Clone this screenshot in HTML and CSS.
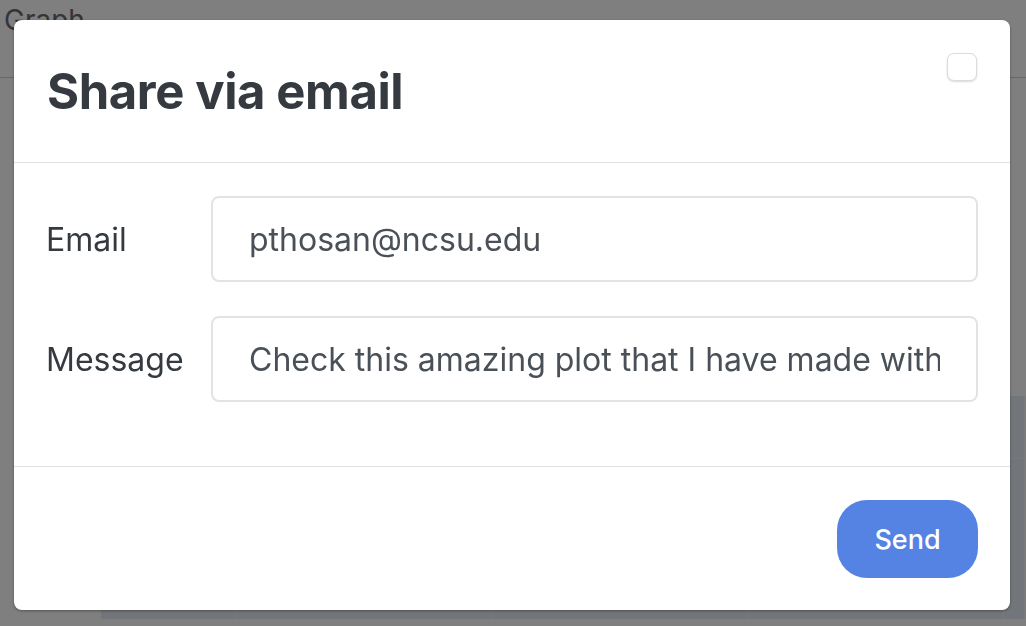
FILE: index.html
```html
<!DOCTYPE html>
<html lang="en">
<head>
<meta charset="utf-8">
<title>Share via email</title>
<link rel="stylesheet" href="styles.css">
</head>
<body>
<div class="page">
  <header class="topbar"><span class="brand">Graph</span></header>
  <main class="content">
    <div class="grid">
      <div class="cell"></div><div class="cell"></div><div class="cell"></div><div class="cell"></div><div class="cell"></div>
      <div class="cell"></div><div class="cell"></div><div class="cell"></div><div class="cell"></div><div class="cell"></div>
    </div>
  </main>
</div>
<div class="backdrop"></div>
<div class="modal" role="dialog">
  <div class="modal-header">
    <h2 class="modal-title">Share via email</h2>
    <button class="close" type="button" aria-label="Close"></button>
  </div>
  <form class="modal-body">
    <div class="row">
      <label class="label" for="email">Email</label>
      <input class="input" id="email" type="text" value="pthosan@ncsu.edu">
    </div>
    <div class="row">
      <label class="label" for="msg">Message</label>
      <input class="input" id="msg" type="text" value="Check this amazing plot that I have made with Graph">
    </div>
  </form>
  <div class="modal-footer">
    <button class="send" type="button">Send</button>
  </div>
</div>
</body>
</html>
```

FILE: styles.css
```css
* { box-sizing: border-box; }
html, body { margin: 0; padding: 0; }
body {
  width: 1026px;
  height: 626px;
  overflow: hidden;
  background: #ffffff;
  font-family: Inter, "Noto Sans", sans-serif;
  color: #343a40;
}
.page {
  display: flex;
  flex-direction: column;
  height: 626px;
  overflow: hidden;
}
.topbar {
  flex: none;
  height: 78px;
  border-bottom: 1px solid #d0d0d0;
  padding: 2px 0 0 4px;
}
.brand {
  font-size: 28px;
  color: #6a6a6a;
  line-height: 36px;
}
.content {
  flex: 1;
  min-height: 0;
  padding: 318px 0 0 101px;
}
.grid {
  display: grid;
  grid-template-columns: 134px 255px 255px 255px 20px;
  grid-template-rows: 62px 160px;
  gap: 1px;
  background: #f4f4f4;
}
.cell { background: #e4eaf4; }
.backdrop {
  position: fixed;
  inset: 0;
  background: rgba(0, 0, 0, 0.5);
}
.modal {
  position: fixed;
  left: 14px;
  top: 20px;
  width: 996px;
  height: 590px;
  background: #ffffff;
  border-radius: 8px;
  box-shadow: 0 1px 3px rgba(0, 0, 0, 0.35);
  display: flex;
  flex-direction: column;
}
.modal-header {
  position: relative;
  flex: none;
  height: 143px;
  border-bottom: 1px solid #dee2e6;
  display: flex;
  align-items: center;
  padding: 0 33px;
}
.modal-title {
  margin: 0;
  font-size: 49px;
  font-weight: 700;
  color: #343a40;
  letter-spacing: -0.4px;
}
.close {
  position: absolute;
  top: 33px;
  right: 33px;
  width: 30px;
  height: 28px;
  padding: 0;
  background: #ffffff;
  border: 1px solid #dcdcdc;
  border-radius: 7px;
  box-shadow: 0 1px 2px rgba(0, 0, 0, 0.15);
}
.modal-body {
  flex: none;
  margin: 0;
  padding: 33px 32px 64px 32px;
  border-bottom: 1px solid #dee2e6;
  display: flex;
  flex-direction: column;
  gap: 34px;
}
.row {
  display: flex;
  align-items: center;
}
.label {
  width: 165px;
  flex: none;
  font-size: 32px;
  color: #343a40;
}
.input {
  flex: 1;
  height: 86px;
  border: 2px solid #e3e3e3;
  border-radius: 8px;
  padding: 0 36px;
  font-family: Inter, "Noto Sans", sans-serif;
  font-size: 32px;
  color: #495057;
  background: #ffffff;
  outline: none;
}
.modal-footer {
  flex: 1;
  display: flex;
  justify-content: flex-end;
  align-items: flex-start;
  padding: 33px 32px 0 0;
}
.send {
  width: 141px;
  height: 78px;
  border: none;
  border-radius: 30px;
  background: #5583e3;
  color: #ffffff;
  font-family: Inter, "Noto Sans", sans-serif;
  font-size: 27px;
  font-weight: 500;
}
```
